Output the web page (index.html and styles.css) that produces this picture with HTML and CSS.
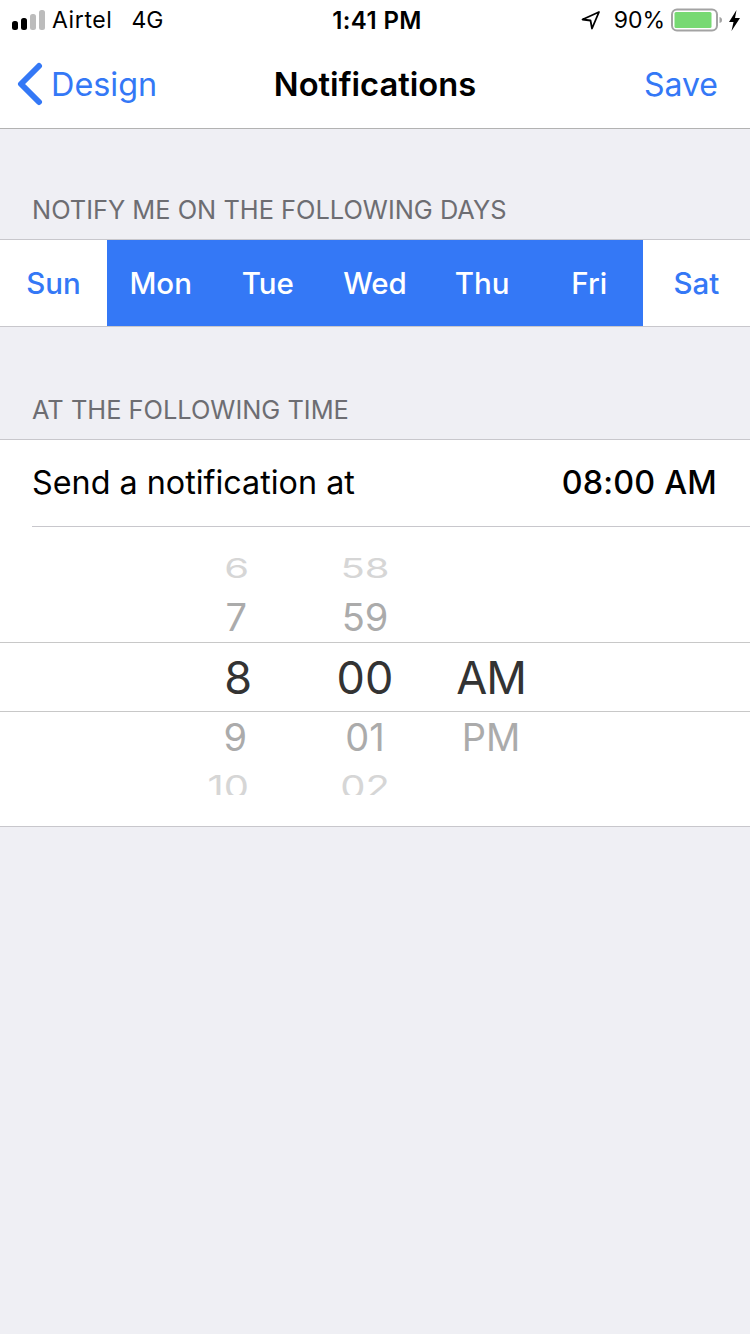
FILE: index.html
```html
<!DOCTYPE html>
<html lang="en">
<head>
  <meta charset="UTF-8">
  <meta name="viewport" content="width=device-width, initial-scale=1.0">
  <title>Notifications</title>
  <link rel="stylesheet" href="styles.css">
</head>
<body>

<div class="status-bar">
  <div class="status-left">
    <svg class="signal" width="34" height="20" viewBox="0 0 34 20">
      <rect x="0" y="11" width="6" height="9" rx="2.5" fill="#000"/>
      <rect x="9" y="8" width="6" height="12" rx="2.5" fill="#000"/>
      <rect x="18" y="4" width="6" height="16" rx="2.5" fill="#bcbcbc"/>
      <rect x="27" y="0" width="6" height="20" rx="2.5" fill="#bcbcbc"/>
    </svg>
    <span class="carrier">Airtel</span>
    <span class="network">4G</span>
  </div>
  <div class="status-time">1:41 PM</div>
  <div class="status-right">
    <svg class="location" width="20" height="20" viewBox="0 0 20 20">
      <path d="M18 2 L1.500 9.500 L9.500 10.500 L11 18.500 Z" fill="none" stroke="#000" stroke-width="1.800" stroke-linejoin="round"/>
    </svg>
    <span class="battery-text">90%</span>
    <svg class="battery" width="52" height="24" viewBox="0 0 52 24">
      <rect x="1" y="1.500" width="45" height="21" rx="5" fill="none" stroke="#a3a3a3" stroke-width="2"/>
      <rect x="3.500" y="4" width="37" height="16" rx="1.500" fill="#77d973"/>
      <path d="M48.500 9 C50.500 9.500 51 10.500 51 12 C51 13.500 50.500 14.500 48.500 15 Z" fill="#a3a3a3"/>
    </svg>
    <svg class="bolt" width="11" height="21" viewBox="0 0 11 21">
      <path d="M7.500 0 L0 12 L4.500 12 L2.500 21 L11 8 L6 8 Z" fill="#000"/>
    </svg>
  </div>
</div>

<div class="nav-bar">
  <a class="nav-back">
    <svg width="28" height="44" viewBox="0 0 28 44">
      <path d="M22 4 L4 22 L22 40" fill="none" stroke="#3478f6" stroke-width="6" stroke-linecap="round" stroke-linejoin="round"/>
    </svg>
    <span>Design</span>
  </a>
  <div class="nav-title">Notifications</div>
  <a class="nav-save">Save</a>
</div>

<h4 class="section-label first">NOTIFY ME ON THE FOLLOWING DAYS</h4>
<div class="days">
  <div class="day">Sun</div>
  <div class="day on">Mon</div>
  <div class="day on">Tue</div>
  <div class="day on">Wed</div>
  <div class="day on">Thu</div>
  <div class="day on">Fri</div>
  <div class="day">Sat</div>
</div>

<h4 class="section-label">AT THE FOLLOWING TIME</h4>
<div class="time-card">
  <div class="time-row">
    <span>Send a notification at</span>
    <span class="time-value">08:00 AM</span>
  </div>
  <div class="picker">
    <div class="wheel-row far top"><span>6</span><span>58</span><span></span></div>
    <div class="wheel-row near"><span>7</span><span>59</span><span></span></div>
    <div class="wheel-row selected"><span>8</span><span>00</span><span>AM</span></div>
    <div class="wheel-row near"><span>9</span><span>01</span><span>PM</span></div>
    <div class="wheel-row far bottom"><span>10</span><span>02</span><span></span></div>
  </div>
</div>

</body>
</html>
```

FILE: styles.css
```css
* { box-sizing: border-box; }
html, body { margin: 0; padding: 0; }
body { width: 750px; height: 1334px; overflow: hidden; background: #efeff4; font-family: Inter, "Liberation Sans", sans-serif; color: #000; }

/* status bar */
.status-bar { height: 40px; background: #fff; display: grid; grid-template-columns: 1fr auto 1fr; align-items: center; padding: 0 10px; font-size: 23px; }
.status-left { display: flex; align-items: center; }
.signal { margin-left: 2px; }
.carrier { margin-left: 6px; letter-spacing: 0.6px; }
.network { margin-left: 19px; }
.status-time { font-weight: 600; font-size: 24px; letter-spacing: 0.4px; margin-left: 4px; }
.status-right { display: flex; align-items: center; justify-content: flex-end; }
.battery-text { margin-left: 13px; }
.battery { margin-left: 6px; }
.bolt { margin-left: 6px; }

/* nav bar */
.nav-bar { height: 89px; background: #fff; border-bottom: 1px solid #b2b2b2; display: grid; grid-template-columns: 1fr auto 1fr; align-items: center; padding: 0 17px; font-size: 32.4px; color: #3478f6; }
.nav-back { display: flex; align-items: center; gap: 6px; }
.nav-title { font-weight: 600; color: #000; font-size: 32.7px; }
.nav-save { justify-self: end; margin-right: 15px; font-size: 32px; }

/* sections */
.section-label { margin: 0; height: 113px; padding: 67px 0 0 32px; font-size: 25.4px; font-weight: 400; line-height: 32px; color: #6d6d72; border-bottom: 1px solid #c8c7cc; }
.section-label.first { height: 111px; padding-top: 65px; }
.days { display: grid; grid-template-columns: repeat(7, 1fr); height: 87px; background: #fff; border-bottom: 1px solid #c8c7cc; }
.day { display: flex; align-items: center; justify-content: center; font-size: 29.5px; font-weight: 500; color: #3478f6; }
.day.on { background: #3478f6; color: #fff; }

/* time */
.time-card { background: #fff; border-bottom: 1px solid #c8c7cc; }
.time-row { margin-left: 32px; height: 87px; padding: 0 33px 2px 0; border-bottom: 1px solid #c8c7cc; display: flex; align-items: center; justify-content: space-between; font-size: 32.3px; }
.time-value { font-weight: 500; letter-spacing: 0.2px; }

.picker { height: 299px; padding-top: 17px; overflow: hidden; }
.wheel-row { display: grid; grid-template-columns: 130px 130px 122px; padding-left: 170px; text-align: center; align-items: center; }
.wheel-row span:first-child { text-align: right; padding-right: 51px; }
.wheel-row.far { height: 48px; font-size: 40px; color: #d6d6d6; }
.wheel-row.far span { display: block; line-height: 40px; }
.wheel-row.top span { transform: scaleY(0.68); }
.wheel-row.near { height: 50px; font-size: 38px; color: #ababab; }
.wheel-row.near span:first-child { padding-right: 53px; }
.wheel-row.selected { height: 70px; font-size: 45px; color: #333; border-top: 1px solid #c8c8c8; border-bottom: 1px solid #c8c8c8; }
.wheel-row.selected span:first-child { padding-right: 48px; }
.wheel-row.selected span:last-child { letter-spacing: -1px; }
.wheel-row.bottom { height: 33px; overflow: hidden; align-items: start; padding-top: 9px; }
.wheel-row.bottom span { transform: scaleY(0.78); transform-origin: top; }
```
